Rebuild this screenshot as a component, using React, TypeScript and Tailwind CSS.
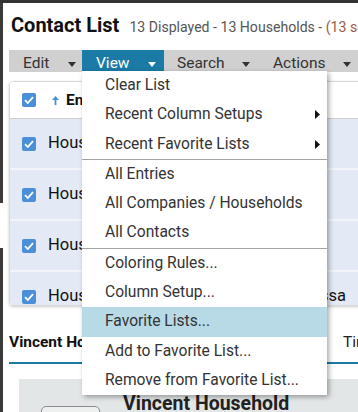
import React from 'react';

const Caret = () => (
  <svg width="8" height="5" viewBox="0 0 8 5" className="mt-[12px] shrink-0">
    <path d="M0 0 L8 0 L4 5 Z" fill="currentColor" />
  </svg>
);

const Check = () => (
  <div className="w-[14px] h-[14px] rounded-[2px] bg-[#4a8fd8] flex items-center justify-center shrink-0">
    <svg width="10" height="8" viewBox="0 0 10 8">
      <path d="M1 4.2 L3.8 7 L9 1.2" stroke="#fff" strokeWidth="1.8" fill="none" />
    </svg>
  </div>
);

const SubArrow = () => (
  <svg width="5" height="9" viewBox="0 0 5 9">
    <path d="M0 0 L5 4.5 L0 9 Z" fill="#111" />
  </svg>
);

type MenuItem = { label: string; sub?: boolean; active?: boolean };

const groups: MenuItem[][] = [
  [{ label: 'Clear List' }, { label: 'Recent Column Setups', sub: true }, { label: 'Recent Favorite Lists', sub: true }],
  [{ label: 'All Entries' }, { label: 'All Companies / Households' }, { label: 'All Contacts' }],
  [
    { label: 'Coloring Rules...' },
    { label: 'Column Setup...' },
    { label: 'Favorite Lists...', active: true },
    { label: 'Add to Favorite List...' },
    { label: 'Remove from Favorite List...' },
  ],
];

const rows = ['Household Adams', 'Household Baker', 'Household Carter', 'Household Vanessa'];

const App = () => {
  return (
    <div className="relative w-[358px] h-[412px] overflow-hidden bg-white flex flex-col font-['Roboto',sans-serif]">
      <div className="h-[3px] bg-[#333] shrink-0" />
      <div className="flex flex-1 min-w-0">
        <div className="w-[3px] flex flex-col shrink-0">
          <div className="h-[200px] bg-[#3a3a3a]" />
          <div className="h-[45px] bg-white" />
          <div className="flex-1 bg-[#3a3a3a]" />
        </div>
        <div className="w-[355px] flex flex-col shrink-0 overflow-hidden">
          {/* title */}
          <div className="flex items-baseline pl-[8px] pt-[10px] whitespace-nowrap">
            <span className="text-[20px] leading-[24px] font-bold text-[#111] shrink-0">Contact List</span>
            <span className="ml-[10px] text-[14.1px] text-[#555] shrink-0">
              13 Displayed - 13 Households - <span className="text-[#9a5a48]">(13 selected)</span>
            </span>
          </div>

          {/* toolbar */}
          <div className="mt-[12px] ml-[6px] h-[22px] bg-[#d0d0d0] flex text-[15.5px] text-[#333] whitespace-nowrap">
            <div className="w-[73px] h-[22px] flex items-start justify-between pl-[14px] pr-[6px] shrink-0">
              <span className="leading-[27px]">Edit</span>
              <Caret />
            </div>
            <div className="w-[82px] h-[22px] flex items-start justify-between pl-[14px] pr-[8px] bg-[#1b7aa6] text-white shrink-0">
              <span className="leading-[27px]">View</span>
              <Caret />
            </div>
            <div className="w-[96px] h-[22px] flex items-start justify-between pl-[13px] pr-[10px] shrink-0">
              <span className="leading-[27px]">Search</span>
              <Caret />
            </div>
            <div className="w-[98px] h-[22px] flex items-start justify-between pl-[13px] pr-[7px] shrink-0">
              <span className="leading-[27px]">Actions</span>
              <Caret />
            </div>
          </div>

          {/* grid */}
          <div className="mt-[9px] ml-[6px] w-[360px] h-[225px] shrink-0 rounded-[4px] border border-[#d8d8d8] shadow-[0_1px_3px_rgba(0,0,0,0.2)] overflow-hidden">
            <div className="h-[37px] bg-white border-b border-[#cfcfcf] flex items-center pl-[12px]">
              <Check />
              <svg width="7" height="9" viewBox="0 0 7 9" className="ml-[16px]">
                <path d="M3.5 0 L7 4 L4.4 4 L4.4 9 L2.6 9 L2.6 4 L0 4 Z" fill="#4a8fd8" />
              </svg>
              <span className="ml-[7px] text-[15.5px] font-bold text-[#111]">Entry Name</span>
            </div>
            {rows.map((r, i) => (
              <div key={i} className="h-[51px] bg-[#e3eaf5] border-b-2 border-[#f1f4f9] flex items-center pl-[12px] pr-[22px] text-[16.5px] text-[#111] whitespace-nowrap">
                <Check />
                <span className="ml-[12px] flex-1">{r}</span>
                {i === 3 && <span>Vanessa</span>}
              </div>
            ))}
          </div>

          {/* tabs */}
          <div className="ml-[6px] pt-[26px] pb-[10px] flex text-[15.5px] leading-[20px] whitespace-nowrap">
            <span className="w-[334px] shrink-0 font-bold text-[#111]">Vincent Household</span>
            <span className="shrink-0 text-[#222]">Timeline</span>
          </div>
          <div className="ml-[6px] h-[2px] bg-[#1b7aa6]" />

          <div className="mt-[15px] ml-[16px] flex-1 bg-[#e2e6e6] flex items-start pl-[22px]">
            <div className="mt-[27px] w-[59px] h-[30px] rounded-[5px] border border-[#8c8c8c] bg-[#eef0f0] shrink-0" />
            <span className="ml-[23px] mt-[13px] text-[19.5px] leading-[24px] font-bold text-[#222] whitespace-nowrap">Vincent Household</span>
          </div>
        </div>
      </div>

      {/* view menu */}
      <div className="absolute left-[82px] top-[71px] w-[245px] bg-white shadow-[2px_2px_5px_rgba(0,0,0,0.35)] text-[15.6px] text-[#333] whitespace-nowrap">
        {groups.map((g, gi) => (
          <div key={gi} className={gi > 0 ? 'border-t border-[#a3a3a3]' : ''}>
            {g.map((it) => (
              <div
                key={it.label}
                className={`h-[29.3px] flex items-center justify-between pl-[23px] pr-[7px] ${it.active ? 'bg-[#b8d9e6]' : ''}`}
              >
                <span>{it.label}</span>
                {it.sub && <SubArrow />}
              </div>
            ))}
          </div>
        ))}
      </div>
    </div>
  );
};

export default App;
